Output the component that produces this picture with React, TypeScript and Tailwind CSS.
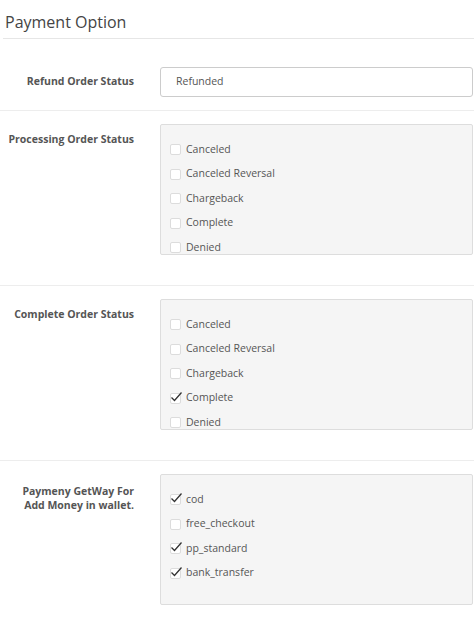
import React from "react"

type Item = { label: string; checked?: boolean }

const processing: Item[] = [
  { label: "Canceled" },
  { label: "Canceled Reversal" },
  { label: "Chargeback" },
  { label: "Complete" },
  { label: "Denied" },
]

const complete: Item[] = [
  { label: "Canceled" },
  { label: "Canceled Reversal" },
  { label: "Chargeback" },
  { label: "Complete", checked: true },
  { label: "Denied" },
]

const gateways: Item[] = [
  { label: "cod", checked: true },
  { label: "free_checkout" },
  { label: "pp_standard", checked: true },
  { label: "bank_transfer", checked: true },
]

const Check = ({ item }: { item: Item }) => (
  <div className="flex items-center h-[24.5px]">
    <span className="relative w-[11px] h-[11px] border border-[#dcdcdc] bg-white rounded-[2px] shrink-0">
      {item.checked && (
        <svg className="absolute -left-[1px] -top-[3px]" width="13" height="12" viewBox="0 0 13 12">
          <path d="M1.5 6.5 L4.5 9.5 L11.5 1.5" fill="none" stroke="#333" strokeWidth="1.3" />
        </svg>
      )}
    </span>
    <span className="ml-[5px] text-[10.5px] text-[#555]">{item.label}</span>
  </div>
)

const ScrollBox = ({ items }: { items: Item[] }) => (
  <div className="flex-1 mr-[1px] h-[131px] overflow-hidden bg-[#f5f5f5] border border-[#dddddd] rounded-[2px] pt-[12.5px] pl-[9px]">
    {items.map((it) => (
      <Check key={it.label} item={it} />
    ))}
  </div>
)

const Label = ({ children, top = "pt-[8px]" }: { children: React.ReactNode; top?: string }) => (
  <div className={`w-[134px] shrink-0 mr-[26px] ${top} text-right text-[10.5px] leading-[14px] font-bold text-[#555]`}>
    {children}
  </div>
)

const App = () => {
  return (
    <div className="w-[474px] h-[620px] overflow-hidden bg-white font-['Open_Sans',sans-serif]">
      <h2 className="ml-[3px] pl-[2px] pt-[11px] pb-[5px] text-[16px] leading-[22px] text-[#444] border-b border-[#e6e6e6]">
        Payment Option
      </h2>

      <div className="flex items-center pt-[28px] pb-[13px]">
        <div className="w-[134px] shrink-0 mr-[26px] text-right text-[10.5px] font-bold text-[#555]">
          Refund Order Status
        </div>
        <div className="flex-1 mr-[1px] h-[30px] flex items-center px-[15px] border border-[#cccccc] rounded-[3px] text-[10.5px] text-[#555]">
          Refunded
        </div>
      </div>

      <div className="flex border-t border-[#ededed] pt-[13px] pb-[30px]">
        <Label>Processing Order Status</Label>
        <ScrollBox items={processing} />
      </div>

      <div className="flex border-t border-[#ededed] pt-[13px] pb-[30px]">
        <Label>Complete Order Status</Label>
        <ScrollBox items={complete} />
      </div>

      <div className="flex border-t border-[#ededed] pt-[13px] pb-[30px]">
        <Label top="pt-[10px]">
          Paymeny GetWay For
          <br />
          Add Money in wallet.
        </Label>
        <ScrollBox items={gateways} />
      </div>
    </div>
  )
}

export default App
